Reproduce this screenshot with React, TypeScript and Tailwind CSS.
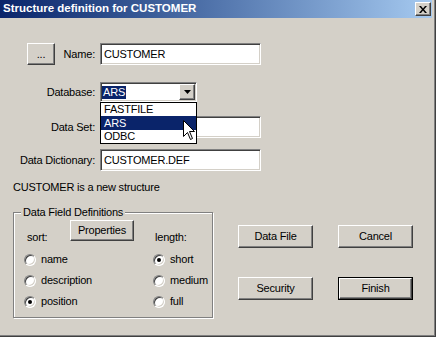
import React from 'react';

const font = "font-['Liberation_Sans',Arial,sans-serif] text-[11px] tracking-[-0.2px] text-black";
const sunken =
  'bg-white border border-t-[#808080] border-l-[#808080] border-b-white border-r-white shadow-[inset_1px_1px_0_#404040,inset_-1px_-1px_0_#d4d0c8]';
const raised =
  'bg-[#d4d0c8] border border-t-white border-l-white border-b-[#404040] border-r-[#404040] shadow-[inset_-1px_-1px_0_#808080]';

const Button = ({ label, className = '', isDefault = false }: { label: string; className?: string; isDefault?: boolean }) => {
  if (isDefault) {
    return (
      <div className={`border border-black ${className}`}>
        <div className={`${raised} w-full h-full flex items-center justify-center`}>{label}</div>
      </div>
    );
  }
  return <div className={`${raised} flex items-center justify-center ${className}`}>{label}</div>;
};

const Radio = ({ label, checked = false }: { label: string; checked?: boolean }) => (
  <div className="flex items-center h-[21px] gap-[5px]">
    <div className="w-[12px] h-[12px] rounded-full bg-white border border-t-[#808080] border-l-[#808080] border-b-white border-r-white shadow-[inset_1px_1px_0_#404040,inset_-1px_-1px_0_#d4d0c8] flex items-center justify-center">
      {checked && <div className="w-[4px] h-[4px] rounded-full bg-black" />}
    </div>
    <span>{label}</span>
  </div>
);

const Cursor = () => (
  <svg width="13" height="21" viewBox="0 0 13 21" className="absolute left-[82px] top-[17px]">
    <path d="M0.5 0.5 L0.5 16.5 L4.5 12.5 L7.5 19.5 L9.5 18.5 L6.5 11.5 L11.5 11.5 Z" fill="white" stroke="black" strokeWidth="1" />
  </svg>
);

export default function App() {
  return (
    <div className={`w-[436px] h-[337px] bg-[#404040] pr-[1px] pb-[1px] ${font}`}>
      <div className="w-full h-full bg-[#808080] pr-[1px] pb-[1px]">
        <div className="w-full h-full bg-[#d4d0c8] pr-[2px] pb-[2px] flex flex-col">
          {/* Title bar */}
          <div className="h-[18px] shrink-0 bg-linear-to-r from-[#0a246a] to-[#a6caf0] flex items-center justify-between">
            <span className="pl-[3px] text-white font-bold text-[11.5px] tracking-normal">Structure definition for CUSTOMER</span>
            <div className={`${raised} w-[16px] h-[14px] mr-[1px] flex items-center justify-center`}>
              <svg width="8" height="7" viewBox="0 0 8 7">
                <path d="M0 0 L2 0 L4 2.5 L6 0 L8 0 L5 3.5 L8 7 L6 7 L4 4.5 L2 7 L0 7 L3 3.5 Z" fill="black" />
              </svg>
            </div>
          </div>

          {/* Name */}
          <div className="flex items-center h-[22px] mt-[25px]">
            <div className="w-[95px] flex items-center">
              <Button label="..." className="ml-[27px] w-[28px] h-[22px]" />
              <span className="flex-1 text-right">Name:</span>
            </div>
            <div className={`${sunken} ml-[5px] w-[161px] h-[22px] flex items-center pl-[3px]`}>CUSTOMER</div>
          </div>

          {/* Database */}
          <div className="flex items-center h-[20px] mt-[17px]">
            <span className="w-[95px] text-right">Database:</span>
            <div className={`${sunken} relative ml-[5px] w-[97px] h-[20px] flex items-center justify-between pl-[1px] pr-[1px]`}>
              <span className="bg-[#0a246a] text-white px-[1px] leading-[13px]">ARS</span>
              <div className={`${raised} w-[16px] h-[16px] flex items-center justify-center`}>
                <svg width="7" height="4" viewBox="0 0 7 4">
                  <path d="M0 0 L7 0 L3.5 4 Z" fill="black" />
                </svg>
              </div>
              <div className="absolute left-[-1px] top-[19px] w-[97px] border border-black bg-white z-10">
                <div className="h-[13px] leading-[13px] pl-[3px]">FASTFILE</div>
                <div className="h-[14px] leading-[14px] pl-[3px] bg-[#0a246a] text-white">ARS</div>
                <div className="h-[13px] leading-[13px] pl-[3px]">ODBC</div>
                <Cursor />
              </div>
            </div>
          </div>

          {/* Data Set */}
          <div className="flex items-center h-[22px] mt-[14px]">
            <span className="w-[95px] text-right">Data Set:</span>
            <div className={`${sunken} ml-[5px] w-[161px] h-[22px]`} />
          </div>

          {/* Data Dictionary */}
          <div className="flex items-center h-[22px] mt-[11px]">
            <span className="w-[95px] text-right">Data Dictionary:</span>
            <div className={`${sunken} ml-[5px] w-[161px] h-[22px] flex items-center pl-[3px]`}>CUSTOMER.DEF</div>
          </div>

          <div className="mt-[9px] h-[14px] leading-[14px] pl-[13px]">CUSTOMER is a new structure</div>

          {/* Bottom section */}
          <div className="flex mt-[18px]">
            <div className="ml-[13px] w-[200px] h-[106px] relative border border-[#808080] shadow-[1px_1px_0_white,inset_1px_1px_0_white]">
              <span className="absolute top-[-8px] left-[7px] px-[2px] leading-[14px] bg-[#d4d0c8]">Data Field Definitions</span>
              <div className="flex items-start pt-[7px]">
                <span className="ml-[13px] w-[43px] mt-[10px] leading-[14px]">sort:</span>
                <Button label="Properties" className="w-[64px] h-[21px]" />
                <span className="ml-[21px] mt-[10px] leading-[14px]">length:</span>
              </div>
              <div className="grid grid-cols-[129px_1fr] ml-[10px] mt-[5px]">
                <Radio label="name" />
                <Radio label="short" checked />
                <Radio label="description" />
                <Radio label="medium" />
                <Radio label="position" checked />
                <Radio label="full" />
              </div>
            </div>

            <div className="ml-[25px] pt-[13px] grid grid-cols-[75px_75px] gap-x-[25px] gap-y-[29px] h-fit">
              <Button label="Data File" className="h-[23px]" />
              <Button label="Cancel" className="h-[23px]" />
              <Button label="Security" className="h-[23px]" />
              <Button label="Finish" className="h-[23px]" isDefault />
            </div>
          </div>
        </div>
      </div>
    </div>
  );
}
